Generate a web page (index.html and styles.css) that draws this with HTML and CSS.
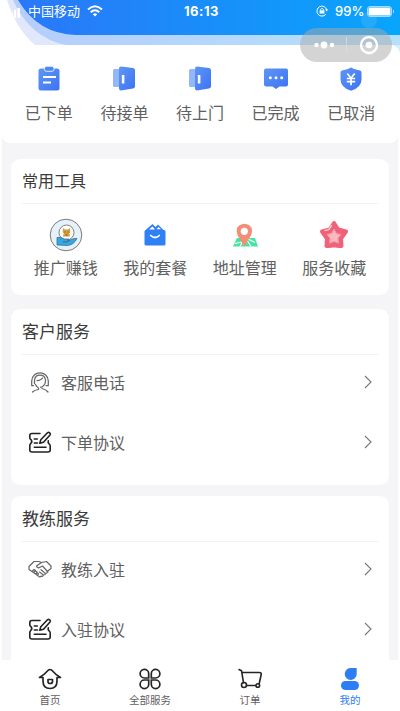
FILE: index.html
```html
<!DOCTYPE html>
<html lang="zh-CN">
<head>
<meta charset="utf-8">
<title>我的</title>
<link rel="stylesheet" href="styles.css">
</head>
<body>
<svg class="defs" width="0" height="0">
  <defs>
    <linearGradient id="blue" x1="0" y1="0" x2="1" y2="1"><stop offset="0" stop-color="#5f96f4"/><stop offset="1" stop-color="#3c73f3"/></linearGradient>
    <linearGradient id="sky" x1="0" y1="0" x2="1" y2="0"><stop offset="0" stop-color="#2a77f8"/><stop offset="1" stop-color="#08a5fb"/></linearGradient>
    <linearGradient id="haze" x1="0" y1="0" x2="1" y2="0"><stop offset="0" stop-color="#b5cdfb"/><stop offset="1" stop-color="#b5e1fd"/></linearGradient>
    <symbol id="door" viewBox="0 0 24 26"><path d="M2.500 4h8v18h-8q-1.500 0-1.500-1.500v-15q0-1.500 1.500-1.500z" fill="#93b7f8"/><path d="M9 1.500l12 1.500q2 .3 2 2v16.500q0 1.500-2 2l-12 2q-2 0-2-2v-20q0-2 2-2z" fill="url(#blue)"/><rect x="9.800" y="10" width="2.600" height="8.500" rx=".5" fill="#fff"/></symbol>
    <symbol id="ticket" viewBox="0 0 24 24"><g fill="none" stroke="#222" stroke-width="1.600" stroke-linecap="round" stroke-linejoin="round"><path d="M12 3.500H4Q1.800 3.500 1.800 5.500v2.200q0 1.200 1.100 1.800 1.800 1.800 0 3.800-1.100.8-1.100 2.200v4.500q0 2 2.200 2h16q2.200 0 2.200-2v-4q0-1.500-1.100-2.200-1.400-1.300-.8-3"/><path d="M6.300 9h3M6.300 13h3.200M6.300 17.300H18"/><path d="M11.800 13.300l1-3.500 6.700-7q1-1 2.200 0 1.200 1 .3 2.200l-6.500 7.200z"/></g></symbol>
    <symbol id="arrow" viewBox="0 0 8 14"><path d="M1 1l6 6-6 6" fill="none" stroke="#777" stroke-width="1.100"/></symbol>
  </defs>
</svg>
<div class="phone">
  <header class="hero">
    <svg class="hero-art" viewBox="0 0 400 45">
      <path d="M7 0Q16 29 35 45H400V0z" fill="#e2e8fc"/>
      <path d="M13 0Q30 38 66 45H400V0z" fill="url(#haze)"/>
      <path d="M392 45q6 1.500 8 8v-8z" fill="#d5effe"/>
      <path d="M18 0Q38 34 76 35H400V0z" fill="url(#sky)"/>
      <circle cx="369" cy="20" r="8" fill="#fff" opacity=".1"/>
    </svg>
    <div class="status">
      <svg class="signal" viewBox="0 0 13 10" fill="#fff"><rect x="0" y="6" width="2" height="4"/><rect x="3.500" y="4" width="2" height="6"/><rect x="7" y="2" width="2" height="8"/><rect x="10.500" y="0" width="2.500" height="10"/></svg>
      <span class="carrier">中国移动</span>
      <svg class="wifi" viewBox="0 0 16 12"><g fill="none" stroke="#fff" stroke-width="2"><path d="M1 4.500q7-6.500 14 0M3.700 7.300q4.300-4 8.600 0"/></g><path d="M5.800 9.200q2.200-1.800 4.400 0L8 11.500z" fill="#fff"/></svg>
      <span class="time">16:13</span>
      <svg class="lock" viewBox="0 0 12 12"><path d="M9.800 9.300A5 5 0 1 1 10.800 5" fill="none" stroke="#fff"/><path d="M9 4.600h3.200l-1.500 2z" fill="#fff"/><rect x="3.600" y="5.300" width="4.800" height="3.200" fill="#fff"/><path d="M4.600 5.500V4.300q1.400-2 2.800 0v1.200" fill="none" stroke="#fff" stroke-width=".8"/></svg>
      <span class="percent">99%</span>
      <svg class="battery" viewBox="0 0 28 11"><rect x=".5" y=".5" width="24" height="10" rx="2.500" fill="none" stroke="#9fdcff"/><rect x="1.500" y="1.500" width="22" height="8" rx="1.300" fill="#fff"/><path d="M26 3.500q2 2 0 4z" fill="#bce6ff"/></svg>
    </div>
  </header>
  <div class="capsule">
    <svg viewBox="0 0 92 34"><g fill="#fff"><circle cx="16.500" cy="17" r="2.200"/><circle cx="24" cy="17" r="3.400"/><circle cx="32" cy="17" r="2.200"/><circle cx="69" cy="17" r="3.300"/></g><circle cx="69" cy="17" r="8" fill="none" stroke="#fff" stroke-width="2.300"/><path d="M46.500 9v16" stroke="#ddd" stroke-width=".8"/></svg>
  </div>
  <main class="content">
    <section class="orders">
      <div class="order"><svg viewBox="0 0 24 26"><rect x="1.500" y="3.500" width="21" height="22" rx="2.500" fill="url(#blue)"/><rect x="7.500" y="1.300" width="9.500" height="5" rx="2" fill="#4f86f2" stroke="#fff" stroke-width=".8"/><path d="M6 12h13M6 17.500h8" stroke="#fff" stroke-width="2.200"/></svg><span>已下单</span></div>
      <div class="order"><svg><use href="#door"/></svg><span>待接单</span></div>
      <div class="order"><svg><use href="#door"/></svg><span>待上门</span></div>
      <div class="order"><svg viewBox="0 0 24 26"><path d="M2 3.500h20q2 0 2 2v14q0 2-2 2h-6.500L12 24 8.500 21.500H2q-2 0-2-2v-14q0-2 2-2z" fill="url(#blue)"/><g fill="#fff"><circle cx="6.300" cy="12.800" r="1.500"/><circle cx="12" cy="12.800" r="1.500"/><circle cx="17.700" cy="12.800" r="1.500"/></g></svg><span>已完成</span></div>
      <div class="order"><svg viewBox="0 0 24 26"><path d="M12 2.500q1 0 3 1.500l6 1.500q1.500.3 1.500 2v7q0 8-10.500 11.300Q1.500 22.500 1.500 14.500v-7q0-1.700 1.500-2L9 4Q11 2.500 12 2.500z" fill="url(#blue)"/><path d="M8.300 8.500l3.700 4.700 3.700-4.700M7.800 13.500h8.400M7.800 16.700h8.400M12 13v7.300" fill="none" stroke="#fff" stroke-width="1.700"/></svg><span>已取消</span></div>
    </section>
    <section class="card tools">
      <h2>常用工具</h2>
      <div class="tool-grid">
        <div class="tool"><svg viewBox="0 0 34 34"><circle cx="17" cy="17" r="15.800" fill="#e5f2fc" stroke="#706d68" stroke-width=".9"/><circle cx="17.500" cy="14.500" r="7.500" fill="#fff" stroke="#777064" stroke-width=".9"/><path d="M14 10l2 1.500h3l2-1.500.3 4-1 1.500.7 3h-7l.7-3-1-1.500z" fill="#d5a03b"/><path d="M15.500 14h1m2 0h1m-3 3h2" stroke="#6f4d1e" stroke-width=".9"/><path d="M8 19.500q4-1 7 1.500h5q1 2-1.500 2l6.500-2.500h3q-3 6.500-10 7L8 27z" fill="#30a9eb" stroke="#49616d" stroke-width=".7"/><path d="M14 23.700q4 1 6-1" fill="none" stroke="#49616d" stroke-width="1"/></svg><span>推广赚钱</span></div>
        <div class="tool"><svg viewBox="0 0 34 34"><path d="M7 12.500L14.500 6l3 3L20 6.500l6 6" fill="#2f80f7"/><path d="M11 11.500l3.500-3 2.500 3zM18.500 11.300L20.500 9l2.500 2.300z" fill="#fff"/><rect x="6.500" y="12" width="21" height="15.500" rx="1.500" fill="#2f80f7"/><path d="M12.700 17.500q4.300 4 8.600 0" fill="none" stroke="#fff" stroke-width="1.700" stroke-linecap="round"/></svg><span>我的套餐</span></div>
        <div class="tool"><svg viewBox="0 0 34 34"><path d="M9 20h18l3 8.500H5z" fill="#43e5a1"/><path d="M7 25.500l9-2M20 21l7 3.500M17 19l-5 9.500M17 19l6 9.500" stroke="#fff" stroke-width="1.200"/><path d="M15.500 27.500L9.800 17.500Q6.500 10.500 11.500 7.200q5-3 9.700 0 5 3.300 1.700 10.300L17 27.500q-.8 1-1.500 0z" fill="#f48d76"/><circle cx="16.300" cy="13.300" r="3.600" fill="#fff"/></svg><span>地址管理</span></div>
        <div class="tool"><svg viewBox="0 0 34 34"><path d="M17 5l4.200 6.500 7.800 2-5 7 .5 7.500q-3.500.3-7.500-.7-4 1-7.500.7l.5-7.500-5-7 7.800-2z" fill="#ef6279" stroke="#ef6279" stroke-width="4" stroke-linejoin="round"/><path d="M17 11l2.500 4.500 4.500 1-3 3.700.5 5L17 23.500l-4.500 1.700.5-5-3-3.700 4.500-1z" fill="#fcb8bf" stroke="#f995a2"/><path d="M8 12.500l4-1 2.500-4" fill="none" stroke="#ffe0d5" stroke-width="1.200" stroke-linecap="round"/></svg><span>服务收藏</span></div>
      </div>
    </section>
    <section class="card service">
      <h2>客户服务</h2>
      <div class="row"><svg class="row-icon" viewBox="0 0 24 24"><g fill="none" stroke="#666" stroke-width="1.250" stroke-linecap="round" stroke-linejoin="round"><path d="M5.500 15.500H3.700V11C4.500 0 19.500 0 20.300 11v4.500H18M6.500 13.500V10c1-6.500 10-6.500 11 0q.3 4.500-3.500 7l-1.500.2M9 10.500q4 0 5.500-2.500M7.500 14.500q1.500 3 3 3.500v1.500q-4 .5-6 2.500M14 18.500q4 1 6 3.500"/></g></svg><span>客服电话</span><svg class="arrow"><use href="#arrow"/></svg></div>
      <div class="row"><svg class="row-icon"><use href="#ticket"/></svg><span>下单协议</span><svg class="arrow"><use href="#arrow"/></svg></div>
    </section>
    <section class="card coach">
      <h2>教练服务</h2>
      <div class="row"><svg class="row-icon" viewBox="0 0 24 24"><g fill="none" stroke="#666" stroke-width="1.200" stroke-linecap="round" stroke-linejoin="round"><path d="M6 4.500L1 9.500v3l3 2 7 5q1 1 2-.3 2 .5 2.300-1.200 2 .2 2.200-1.500 2 0 1.500-2L23 11.500V9l-4.500-4.500-5 1L11 4.500zM13.500 5.500L8.500 9q1 3 4 1l2-1 5.500 6M11.500 15l4 3M13 12.700l4.500 3.800M4 14.500l2-2 1.500 1-2 2 2-1.500 1.500 1-1.500 2 2-1 1 1-1 1.500"/></g></svg><span>教练入驻</span><svg class="arrow"><use href="#arrow"/></svg></div>
      <div class="row"><svg class="row-icon"><use href="#ticket"/></svg><span>入驻协议</span><svg class="arrow"><use href="#arrow"/></svg></div>
    </section>
  </main>
  <nav class="tabs">
    <div class="tab"><svg viewBox="0 0 24 24"><g fill="none" stroke="#252525" stroke-width="1.700" stroke-linejoin="round"><path d="M5 10.500H1.500q5-3 9-7.500 1.500-1 3 0 4 4.500 9 7.500H19V14q0 7.500-7 7.500T5 14z"/><path d="M10 12.500h4.500v2q0 2-2.300 2T10 14.500z"/></g></svg><span>首页</span></div>
    <div class="tab"><svg viewBox="0 0 24 24"><g fill="none" stroke="#252525" stroke-width="1.700"><path d="M10.700 11V6.500a4.300 4.300 0 1 0-4.300 4.500zM13.300 11V6.500a4.300 4.300 0 1 1 4.300 4.500zM10.700 13v4.500a4.300 4.300 0 1 1-4.300-4.500zM13.300 13v4.500a4.300 4.300 0 1 0 4.300-4.500z"/></g></svg><span>全部服务</span></div>
    <div class="tab"><svg viewBox="0 0 24 24"><g fill="none" stroke="#252525" stroke-width="1.600" stroke-linecap="round" stroke-linejoin="round"><path d="M1 2.500l2.500 1.200 2 12M4 5.500h17.500q2 0 1.700 2l-2 9M8.500 18.500h9"/><circle cx="6" cy="18" r="2.500"/><circle cx="19.800" cy="18.500" r="1.800"/></g></svg><span>订单</span></div>
    <div class="tab active"><svg viewBox="0 0 24 24" fill="#2d7df3"><path d="M12.300 1h5.900q.5 0 .5.500v5.700a6 6 0 1 1-6.400-6.200z"/><rect x="3" y="14" width="18" height="9" rx="4.500"/></svg><span>我的</span></div>
  </nav>
</div>
</body>
</html>
```
FILE: styles.css
```css
* { box-sizing: border-box; }
body { margin: 0; background: #fff; font-family: "Noto Sans CJK SC", sans-serif; color: #606060; }
svg { display: block; flex: none; }
.defs { position: absolute; }
.phone { width: 400px; height: 711px; display: flex; flex-direction: column; position: relative; overflow: hidden; }
.hero { height: 45px; flex: none; position: relative; }
.hero-art { position: absolute; inset: 0; width: 400px; height: 45px; overflow: visible; }
.status { position: relative; display: flex; align-items: center; height: 22px; padding-left: 7px; color: #fff; }
.signal { width: 13px; height: 10px; margin-top: 3px; }
.carrier { font-size: 13px; line-height: 22px; margin-left: 8px; width: 53px; }
.wifi { width: 16px; height: 12px; margin-left: 6px; }
.time { font: 700 13px/22px Inter, sans-serif; margin-left: 81px; width: 37px; letter-spacing: .5px; }
.lock { width: 12px; height: 12px; margin-left: 95px; }
.percent { font: 500 13px/22px Inter, sans-serif; margin-left: 7px; width: 28px; }
.battery { width: 28px; height: 11px; margin-left: 4px; }
.capsule { position: absolute; left: 300px; top: 28px; width: 92px; height: 34px; border-radius: 17px; background: rgba(170, 170, 170, .5); }
.content { flex: 1; min-height: 0; overflow: hidden; margin: 0 2px; background: #f5f5f8; }
.orders { height: 98px; background: #fff; border-radius: 0 0 8px 8px; display: flex; padding: 20px 9px 0; }
.order { flex: 1; display: flex; flex-direction: column; align-items: center; font-size: 16px; line-height: 24px; }
.order svg { width: 24px; height: 26px; margin-bottom: 9px; }
.card { background: #fff; border-radius: 9px; margin: 0 9px; padding: 0 10px; }
.tools { margin-top: 16px; height: 136px; }
.service { margin-top: 14px; height: 176px; }
.coach { margin-top: 11px; height: 180px; }
h2 { margin: 0; padding-left: 1px; height: 46px; border-bottom: 1px solid #f3f3f4; font-size: 17px; line-height: 44px; font-weight: 400; color: #3c3c3c; }
.tools h2 { height: 45px; font-size: 16px; line-height: 43px; }
.tool-grid { display: grid; grid-template-columns: repeat(4, 1fr); padding-top: 14px; }
.tool { display: flex; flex-direction: column; align-items: center; font-size: 16px; line-height: 24px; }
.tool svg { width: 34px; height: 34px; margin-bottom: 3px; }
.row { display: flex; align-items: center; height: 60px; padding: 0 7px; font-size: 16px; }
.row:first-of-type { height: 54px; }
.row + .row { height: 65px; }
.row-icon { width: 24px; height: 24px; margin-right: 9px; }
.arrow { width: 8px; height: 14px; margin-left: auto; }
.tabs { height: 51px; flex: none; background: #fff; display: flex; }
.tab { flex: 1; display: flex; flex-direction: column; align-items: center; padding-top: 7px; font-size: 10.5px; line-height: 16px; }
.tab svg { width: 24px; height: 24px; margin-bottom: 1px; }
.active { color: #2d7df3; }
```
